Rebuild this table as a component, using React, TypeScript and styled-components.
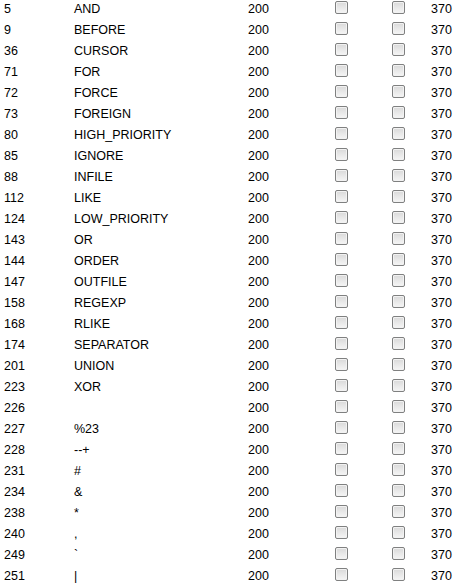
import React from 'react';
import styled, { createGlobalStyle } from 'styled-components';

const GlobalStyle = createGlobalStyle`
  html, body {
    margin: 0;
    padding: 0;
    background: #ffffff;
  }
  body {
    font-family: Arial, "Liberation Sans", sans-serif;
    font-size: 12.5px;
    color: #000000;
    overflow: hidden;
  }
`;

const words = [
  ['5', 'AND'],
  ['9', 'BEFORE'],
  ['36', 'CURSOR'],
  ['71', 'FOR'],
  ['72', 'FORCE'],
  ['73', 'FOREIGN'],
  ['80', 'HIGH_PRIORITY'],
  ['85', 'IGNORE'],
  ['88', 'INFILE'],
  ['112', 'LIKE'],
  ['124', 'LOW_PRIORITY'],
  ['143', 'OR'],
  ['144', 'ORDER'],
  ['147', 'OUTFILE'],
  ['158', 'REGEXP'],
  ['168', 'RLIKE'],
  ['174', 'SEPARATOR'],
  ['201', 'UNION'],
  ['223', 'XOR'],
  ['226', ''],
  ['227', '%23'],
  ['228', '--+'],
  ['231', '#'],
  ['234', '&'],
  ['238', '*'],
  ['240', ','],
  ['249', '`'],
  ['251', '|'],
];

const Table = styled.div`
  margin-top: -1px;
  padding-left: 4px;
`;

const Row = styled.div`
  display: grid;
  grid-template-columns: 70px 174px 87px 57px 39px 1fr;
  align-items: center;
  height: 21px;
`;

const Cell = styled.div`
  line-height: 21px;
  white-space: pre;
`;

const BoxCell = styled.div`
  display: flex;
  align-items: center;
  height: 21px;
  padding-bottom: 4px;
  box-sizing: border-box;
`;

const Check = styled.span`
  display: block;
  width: 13px;
  height: 13px;
  box-sizing: border-box;
  border: 1px solid #7f8080;
  border-radius: 2px;
  background: linear-gradient(180deg, #d9d9d9 0%, #e9e9e9 55%, #f5f5f5 100%);
  box-shadow: inset 0 0 0 1px #f2f2f2;
`;

export default function App() {
  return (
    <>
      <GlobalStyle />
      <Table>
        {words.map(([id, word]) => (
          <Row key={id}>
            <Cell>{id}</Cell>
            <Cell>{word}</Cell>
            <Cell>200</Cell>
            <BoxCell>
              <Check />
            </BoxCell>
            <BoxCell>
              <Check />
            </BoxCell>
            <Cell>370</Cell>
          </Row>
        ))}
      </Table>
    </>
  );
}
